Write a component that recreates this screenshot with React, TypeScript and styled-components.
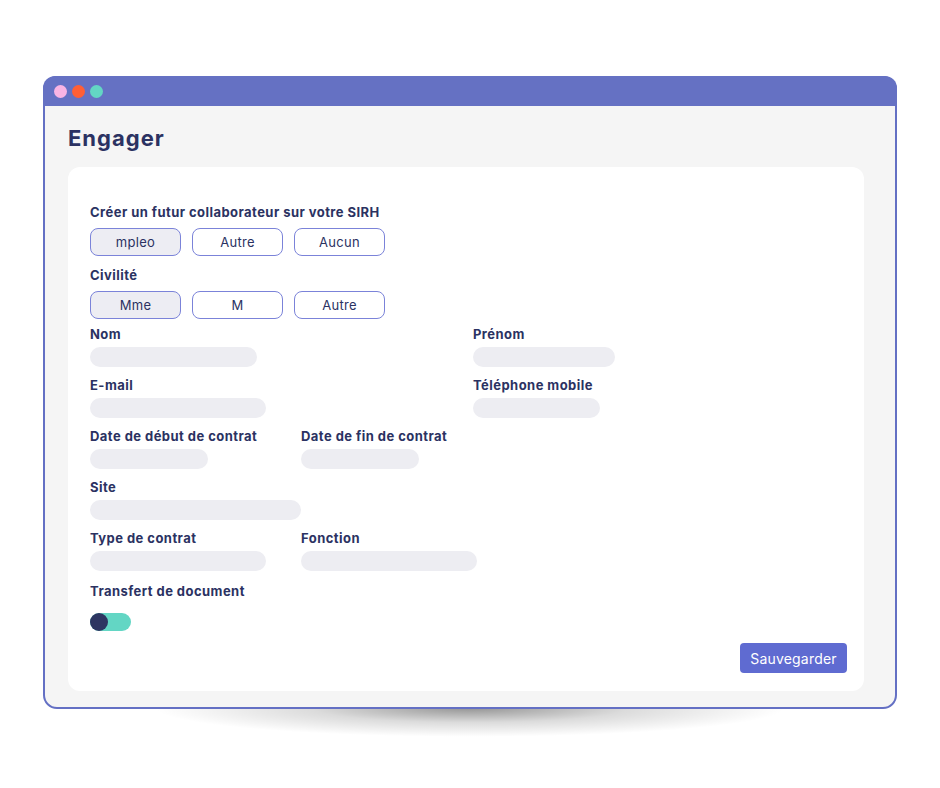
import React from "react";
import styled, { createGlobalStyle } from "styled-components";

const Global = createGlobalStyle`
  html { background: #ffffff; }
  html, body { margin: 0; padding: 0; }
  body { font-family: "Inter", "Noto Sans", sans-serif; color: #2b3262; }
  * { box-sizing: border-box; }
`;

const Page = styled.div`
  width: 940px;
  height: 788px;
  padding: 76px 0 0 43px;
`;

const Window = styled.div`
  position: relative;
  width: 854px;
  height: 633px;
  border: 2px solid #6470c4;
  border-radius: 14px;
  background: #f5f5f5;
  display: flex;
  flex-direction: column;
  &::after {
    content: "";
    position: absolute;
    left: 110px;
    right: 110px;
    top: 100%;
    height: 36px;
    margin-top: 1px;
    background: radial-gradient(ellipse 50% 80% at 50% 0%, rgba(0,0,0,0.42), rgba(0,0,0,0.14) 50%, rgba(0,0,0,0) 100%);
    z-index: -1;
  }
`;

const TitleBar = styled.div`
  margin: -2px -2px 0;
  height: 30px;
  background: #6571c3;
  border-radius: 12px 12px 0 0;
  display: flex;
  align-items: center;
  gap: 5px;
  padding: 0 0 0 11px;
`;

const Dot = styled.span<{ $c: string }>`
  width: 13px;
  height: 13px;
  border-radius: 50%;
  background: ${(p) => p.$c};
`;

const Body = styled.div`
  flex: 1;
  padding: 19px 31px 16px 23px;
  display: flex;
  flex-direction: column;
`;

const Heading = styled.h1`
  margin: 0 0 16px;
  font-size: 22px;
  line-height: 26px;
  font-weight: 700;
  color: #2b3262;
  letter-spacing: 1px;
`;

const Card = styled.div`
  flex: 1;
  background: #ffffff;
  border-radius: 12px;
  padding: 37px 17px 18px 22px;
  display: flex;
  flex-direction: column;
`;

const Section = styled.div<{ $mb?: number }>`
  display: flex;
  flex-direction: column;
  gap: 8px;
  margin-bottom: ${(p) => p.$mb ?? 0}px;
`;

const Label = styled.div`
  font-size: 13px;
  line-height: 16px;
  font-weight: 700;
  color: #2b3262;
  white-space: nowrap;
  letter-spacing: 0.45px;
`;

const Choices = styled.div`
  display: flex;
  gap: 11px;
`;

const Choice = styled.button<{ $active?: boolean }>`
  width: 91px;
  height: 28px;
  border: 1px solid #7b83d9;
  border-radius: 8px;
  background: ${(p) => (p.$active ? "#ededf3" : "#ffffff")};
  font-family: inherit;
  font-size: 13px;
  letter-spacing: 0.3px;
  color: #2b3262;
  padding: 0;
`;

const Grid = styled.div`
  display: grid;
  grid-template-columns: 211px 172px 1fr;
  row-gap: 10px;
`;

const Field = styled.div<{ $col: number; $row: number }>`
  grid-column: ${(p) => p.$col};
  grid-row: ${(p) => p.$row};
  display: flex;
  flex-direction: column;
  gap: 5px;
`;

const Input = styled.div<{ $w: number }>`
  width: ${(p) => p.$w}px;
  height: 20px;
  border-radius: 10px;
  background: #ededf2;
`;

const ToggleSection = styled.div`
  display: flex;
  flex-direction: column;
  gap: 14px;
  margin-top: 12px;
`;

const Toggle = styled.div`
  width: 41px;
  height: 18px;
  border-radius: 9px;
  background: #63d6c4;
  display: flex;
  align-items: center;
`;

const Knob = styled.span`
  width: 18px;
  height: 18px;
  border-radius: 50%;
  background: #2d3561;
`;

const Footer = styled.div`
  margin-top: auto;
  display: flex;
  justify-content: flex-end;
`;

const Save = styled.button`
  width: 107px;
  height: 30px;
  border: none;
  border-radius: 4px;
  background: #5f6bd1;
  color: #ffffff;
  font-family: inherit;
  font-size: 14px;
  letter-spacing: 0.2px;
  padding: 0;
`;

type F = { label: string; col: number; w: number };
const fields: F[][] = [
  [
    { label: "Nom", col: 1, w: 167 },
    { label: "Prénom", col: 3, w: 142 },
  ],
  [
    { label: "E-mail", col: 1, w: 176 },
    { label: "Téléphone mobile", col: 3, w: 127 },
  ],
  [
    { label: "Date de début de contrat", col: 1, w: 118 },
    { label: "Date de fin de contrat", col: 2, w: 118 },
  ],
  [{ label: "Site", col: 1, w: 211 }],
  [
    { label: "Type de contrat", col: 1, w: 176 },
    { label: "Fonction", col: 2, w: 176 },
  ],
];

export default function App() {
  return (
    <Page>
      <Global />
      <Window>
        <TitleBar>
          <Dot $c="#f9b4e4" />
          <Dot $c="#ff5f36" />
          <Dot $c="#63d6c4" />
        </TitleBar>
        <Body>
          <Heading>Engager</Heading>
          <Card>
            <Section $mb={11}>
              <Label>Créer un futur collaborateur sur votre SIRH</Label>
              <Choices>
                <Choice $active>mpleo</Choice>
                <Choice>Autre</Choice>
                <Choice>Aucun</Choice>
              </Choices>
            </Section>
            <Section $mb={7}>
              <Label>Civilité</Label>
              <Choices>
                <Choice $active>Mme</Choice>
                <Choice>M</Choice>
                <Choice>Autre</Choice>
              </Choices>
            </Section>
            <Grid>
              {fields.map((row, ri) =>
                row.map((f) => (
                  <Field key={f.label} $col={f.col} $row={ri + 1}>
                    <Label>{f.label}</Label>
                    <Input $w={f.w} />
                  </Field>
                ))
              )}
            </Grid>
            <ToggleSection>
              <Label>Transfert de document</Label>
              <Toggle>
                <Knob />
              </Toggle>
            </ToggleSection>
            <Footer>
              <Save>Sauvegarder</Save>
            </Footer>
          </Card>
        </Body>
      </Window>
    </Page>
  );
}
